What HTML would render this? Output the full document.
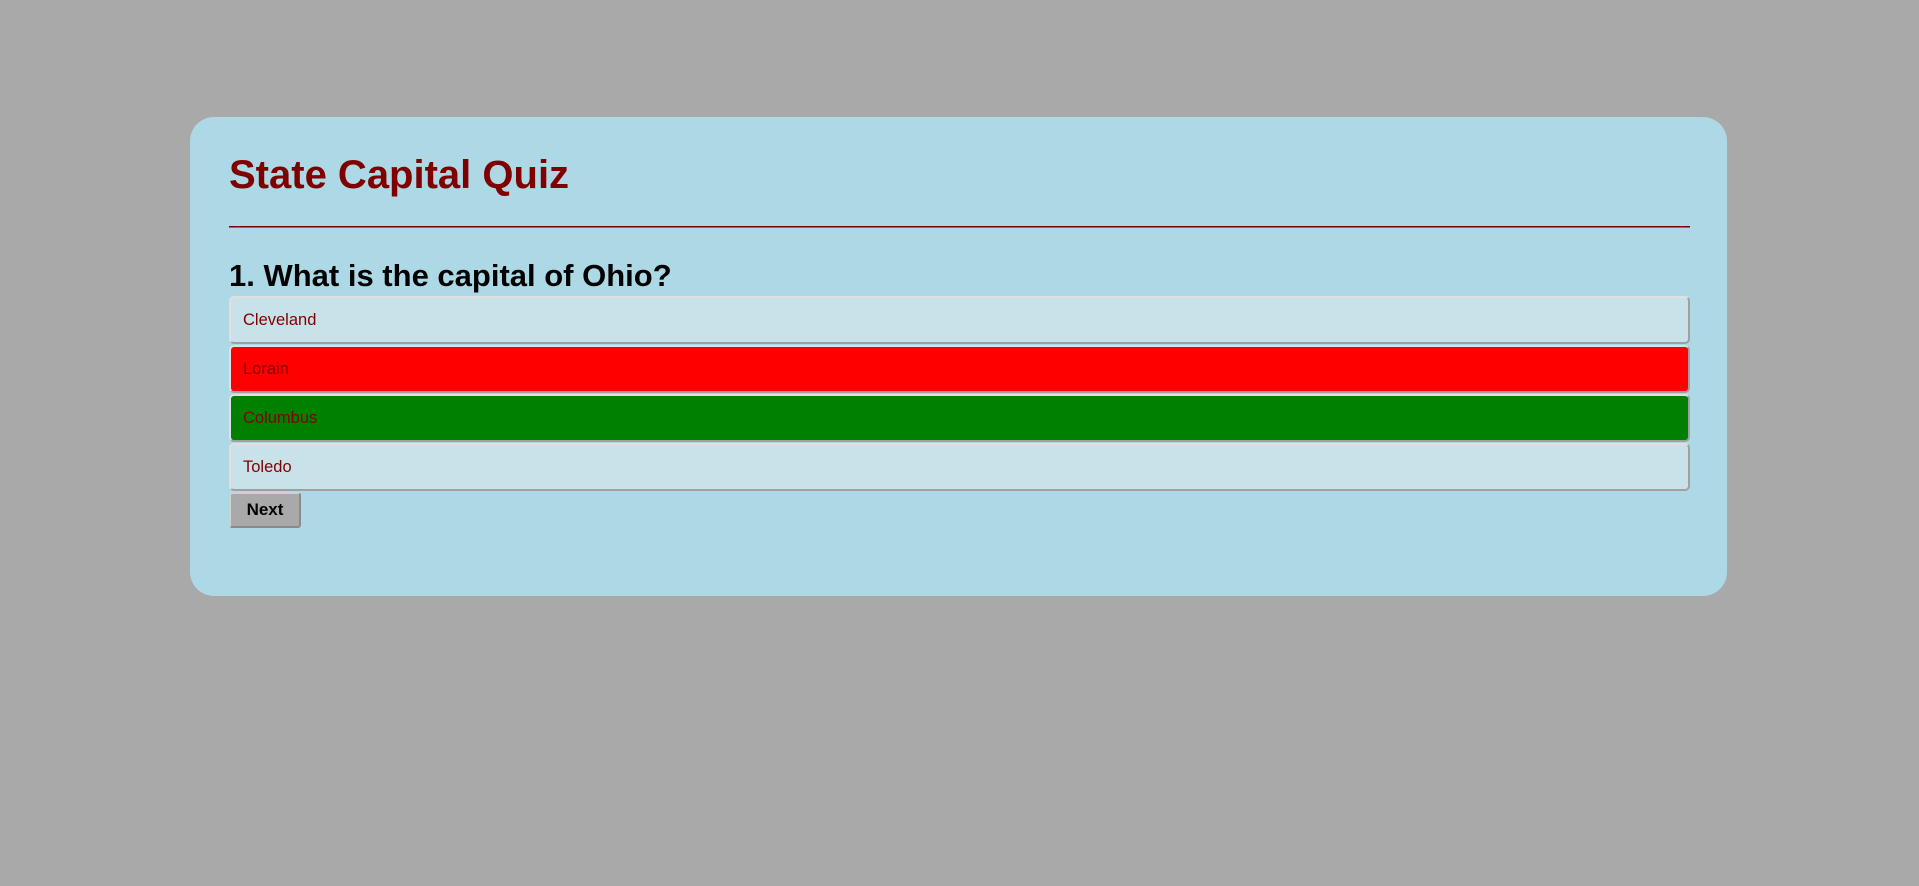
<!DOCTYPE html>
<html><head><style>
body{margin:0;background:#a9a9a9;width:1919px;height:886px;font-family:"Liberation Sans",Arial,sans-serif;overflow:hidden}
.card{position:absolute;left:190px;top:117px;width:1537px;height:479px;background:#add8e6;border-radius:24px}
h1{position:absolute;left:39px;top:36px;margin:0;font-size:40px;color:#800000;font-weight:bold}
.hr{position:absolute;left:39px;top:109px;width:1461px;height:1px;background:#800000;border-bottom:1px solid #777}
h2{position:absolute;left:39px;top:141px;margin:0;font-size:31px;font-weight:bold;color:#000}
.opt{position:absolute;left:39px;border:2px solid;border-color:#e0e0e0 #a0a0a0 #a0a0a0 #e0e0e0;border-radius:5px;background:#c9e1e8;color:#800000;font-size:16.5px;line-height:44px;padding-left:12px;box-sizing:border-box;width:1461px;height:48px}
.next{position:absolute;left:39px;top:375px;width:72px;height:36px;box-sizing:border-box;background:#a9a9a9;border:2px solid;border-color:#d0d0d0 #8a8a8a #8a8a8a #d0d0d0;border-radius:3px;font-weight:bold;font-size:17px;line-height:32px;text-align:center;color:#000}
</style></head><body>
<div class="card">
<h1>State Capital Quiz</h1>
<div class="hr"></div>
<h2>1. What is the capital of Ohio?</h2>
<div class="opt" style="top:179px">Cleveland</div>
<div class="opt" style="top:228px;background:#f00">Lorain</div>
<div class="opt" style="top:277px;background:#008000">Columbus</div>
<div class="opt" style="top:326px">Toledo</div>
<div class="next">Next</div>
</div>
</body></html>
